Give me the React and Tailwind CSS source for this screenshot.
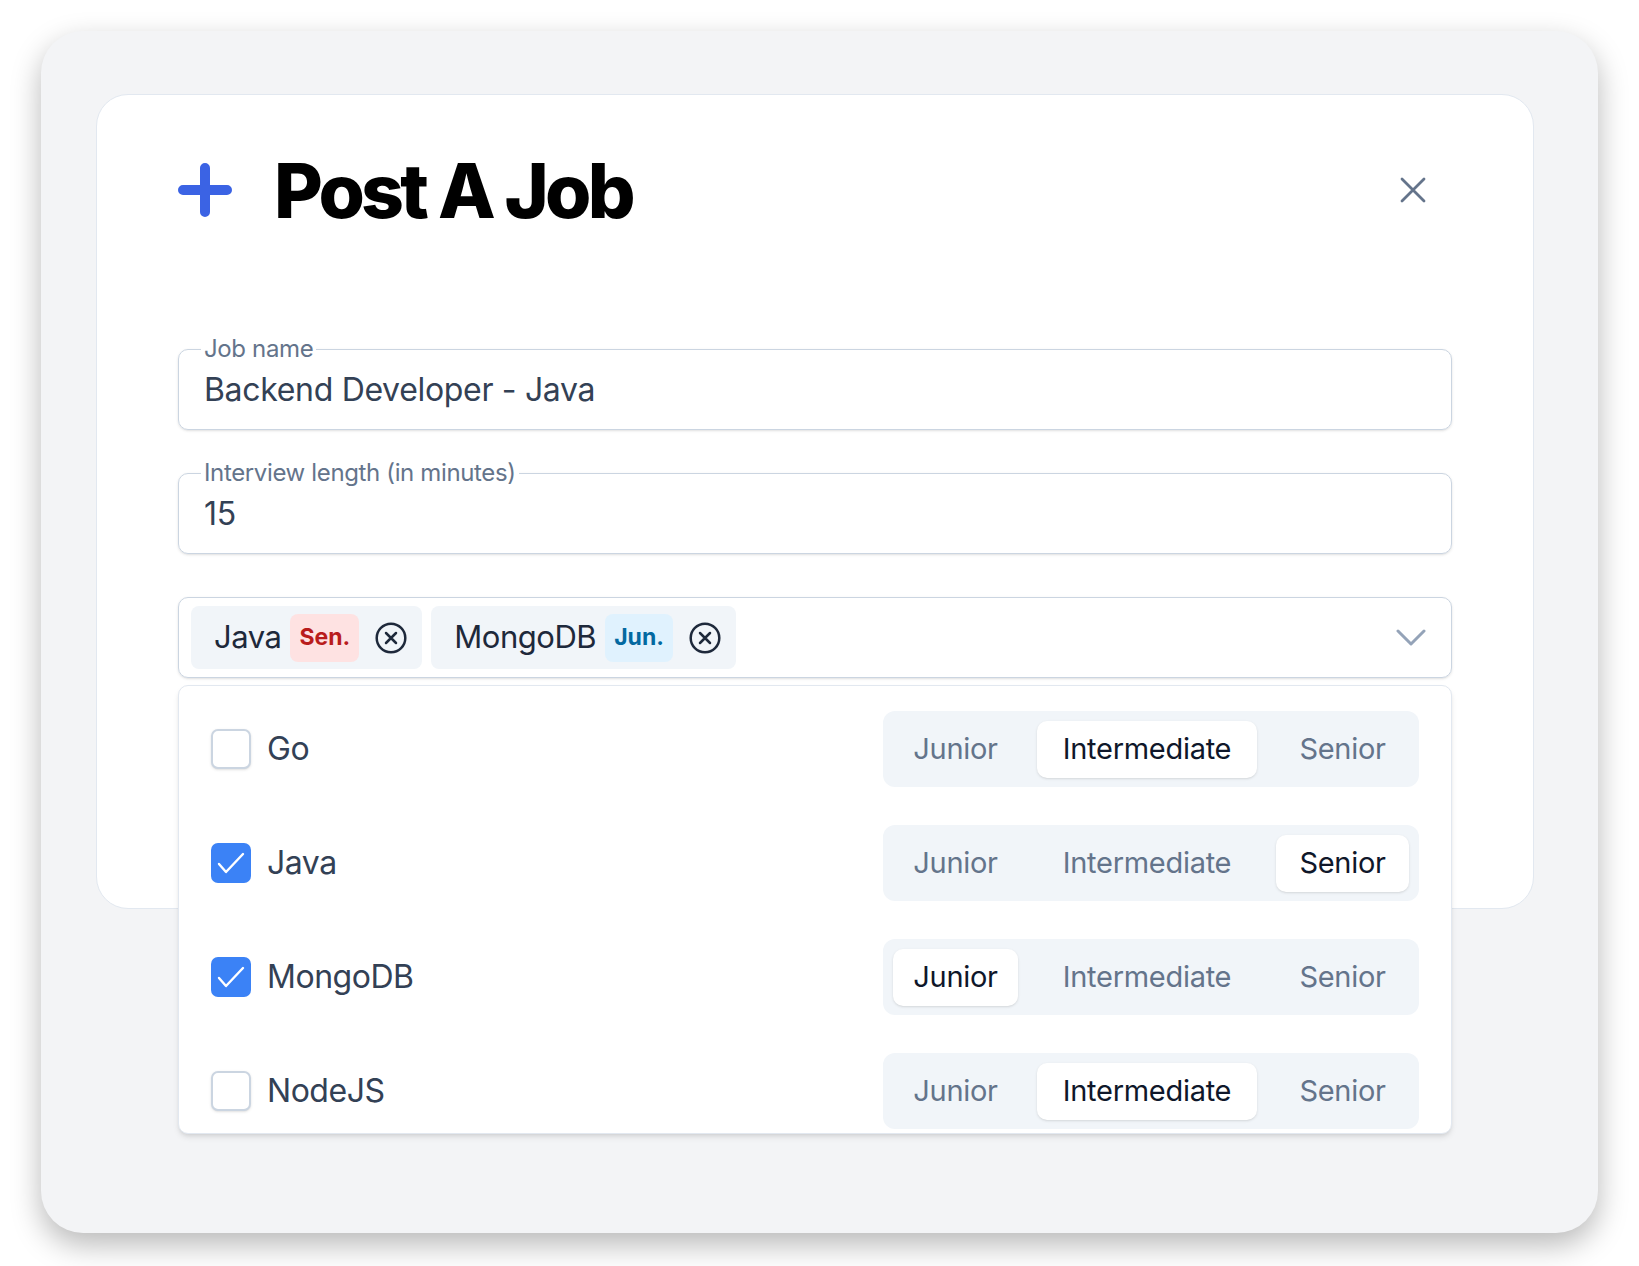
import { useState } from "react";

const font = { fontFamily: "Inter, 'Noto Sans', sans-serif" };

const skills = [
  { name: "Go", checked: false, level: "Intermediate" },
  { name: "Java", checked: true, level: "Senior" },
  { name: "MongoDB", checked: true, level: "Junior" },
  { name: "NodeJS", checked: false, level: "Intermediate" },
];

const levels = [
  { key: "Junior", w: "w-[125px]" },
  { key: "Intermediate", w: "w-[220px]" },
  { key: "Senior", w: "w-[133px]" },
];

function CircleX() {
  return (
    <svg width="32" height="32" viewBox="0 0 32 32" fill="none" stroke="#1e293b" strokeWidth="2.5" strokeLinecap="round">
      <circle cx="16" cy="16" r="14.3" />
      <path d="M11 11l10 10M21 11L11 21" />
    </svg>
  );
}

function Field({ label, value }) {
  return (
    <div className="relative h-[81px] rounded-[10px] border-[1.5px] border-[#cbd5e1] shadow-sm flex items-center px-[25px]">
      <span className="absolute -top-[16px] left-[22px] bg-white px-[3px] text-[24px] tracking-[-0.015em] text-[#64748b] leading-[30px]">
        {label}
      </span>
      <span className="text-[32px] text-[#334155] tracking-[-0.01em]">{value}</span>
    </div>
  );
}

function Chip({ name, badge, badgeCls }) {
  return (
    <div className="flex items-center h-[63px] rounded-[8px] bg-[#f1f5f9] pl-[23px] pr-[15px]">
      <span className="text-[31px] text-[#1e293b] tracking-[-0.015em]">{name}</span>
      <span className={"ml-[9px] h-[48px] flex items-center rounded-[8px] px-[9px] text-[23px] font-bold " + badgeCls}>
        {badge}
      </span>
      <span className="ml-[16px] flex">
        <CircleX />
      </span>
    </div>
  );
}

function Segmented({ value }) {
  return (
    <div className="flex items-center gap-[19px] h-[76px] rounded-[12px] bg-[#f1f5f9] px-[10px]">
      {levels.map((l) => (
        <div
          key={l.key}
          className={
            l.w +
            " h-[57px] flex items-center justify-center rounded-[10px] text-[29px] tracking-[-0.01em] " +
            (value === l.key ? "bg-white text-[#0f172a] shadow-sm" : "text-[#64748b]")
          }
        >
          {l.key}
        </div>
      ))}
    </div>
  );
}

function Checkbox({ checked }) {
  if (checked) {
    return (
      <div className="w-[40px] h-[40px] rounded-[7px] bg-[#3b82f6] flex items-center justify-center">
        <svg width="40" height="40" viewBox="0 0 40 40" fill="none" stroke="white" strokeWidth="2.4" strokeLinecap="round" strokeLinejoin="round">
          <path d="M8 21l7 8 17-18" />
        </svg>
      </div>
    );
  }
  return <div className="w-[40px] h-[40px] rounded-[7px] border-2 border-[#cbd5e1] bg-white shadow-sm" />;
}

export default function App() {
  const [items] = useState(skills);

  return (
    <div className="min-h-screen bg-white pt-[31px] px-[41px]" style={font}>
      <div className="h-[1202px] rounded-[42px] bg-[#f3f4f6] shadow-[0_12px_30px_rgba(0,0,0,0.28)] pt-[63px] pl-[55px] pr-[64px]">
        <div className="relative h-[815px] rounded-[32px] border-[1.5px] border-[#e2e8f0] bg-white px-[81px] pt-[55px]">
          {/* header */}
          <div className="flex items-center h-[80px]">
            <svg width="54" height="54" viewBox="0 0 54 54" fill="none" stroke="#3b63e4" strokeWidth="10" strokeLinecap="round">
              <path d="M27 5v44M5 27h44" />
            </svg>
            <h1 className="ml-[42px] text-[75px] font-extrabold tracking-[-0.05em] text-black leading-none">
              Post A Job
            </h1>
            <button className="ml-auto mr-[26px] flex">
              <svg width="26" height="26" viewBox="0 0 26 26" fill="none" stroke="#64748b" strokeWidth="2.8" strokeLinecap="round">
                <path d="M2 2l22 22M24 2L2 24" />
              </svg>
            </button>
          </div>

          <div className="mt-[119px] flex flex-col gap-[43px]">
            <Field label="Job name" value="Backend Developer - Java" />
            <Field label="Interview length (in minutes)" value="15" />

            <div className="relative">
              <div className="h-[81px] rounded-[10px] border-[1.5px] border-[#cbd5e1] shadow-sm flex items-center pl-[12px] pr-[25px] gap-[9px]">
                <Chip name="Java" badge="Sen." badgeCls="bg-[#fee2e2] text-[#b91c1c]" />
                <Chip name="MongoDB" badge="Jun." badgeCls="bg-[#e0f2fe] text-[#0369a1]" />
                <svg className="ml-auto" width="30" height="18" viewBox="0 0 30 18" fill="none" stroke="#94a3b8" strokeWidth="3" strokeLinecap="round" strokeLinejoin="round">
                  <path d="M2 2l13 13L28 2" />
                </svg>
              </div>

              {/* dropdown */}
              <div className="absolute left-0 right-0 top-full mt-[7px] z-10 h-[449px] overflow-hidden rounded-[10px] border-[1.5px] border-[#e2e8f0] bg-white shadow-md pt-[6px] px-[32px]">
                {items.map((s) => (
                  <div key={s.name} className="flex items-center py-[19px]">
                    <Checkbox checked={s.checked} />
                    <span className="ml-[16px] text-[32px] text-[#334155] tracking-[-0.015em]">{s.name}</span>
                    <div className="ml-auto">
                      <Segmented value={s.level} />
                    </div>
                  </div>
                ))}
              </div>
            </div>
          </div>
        </div>
      </div>
    </div>
  );
}
